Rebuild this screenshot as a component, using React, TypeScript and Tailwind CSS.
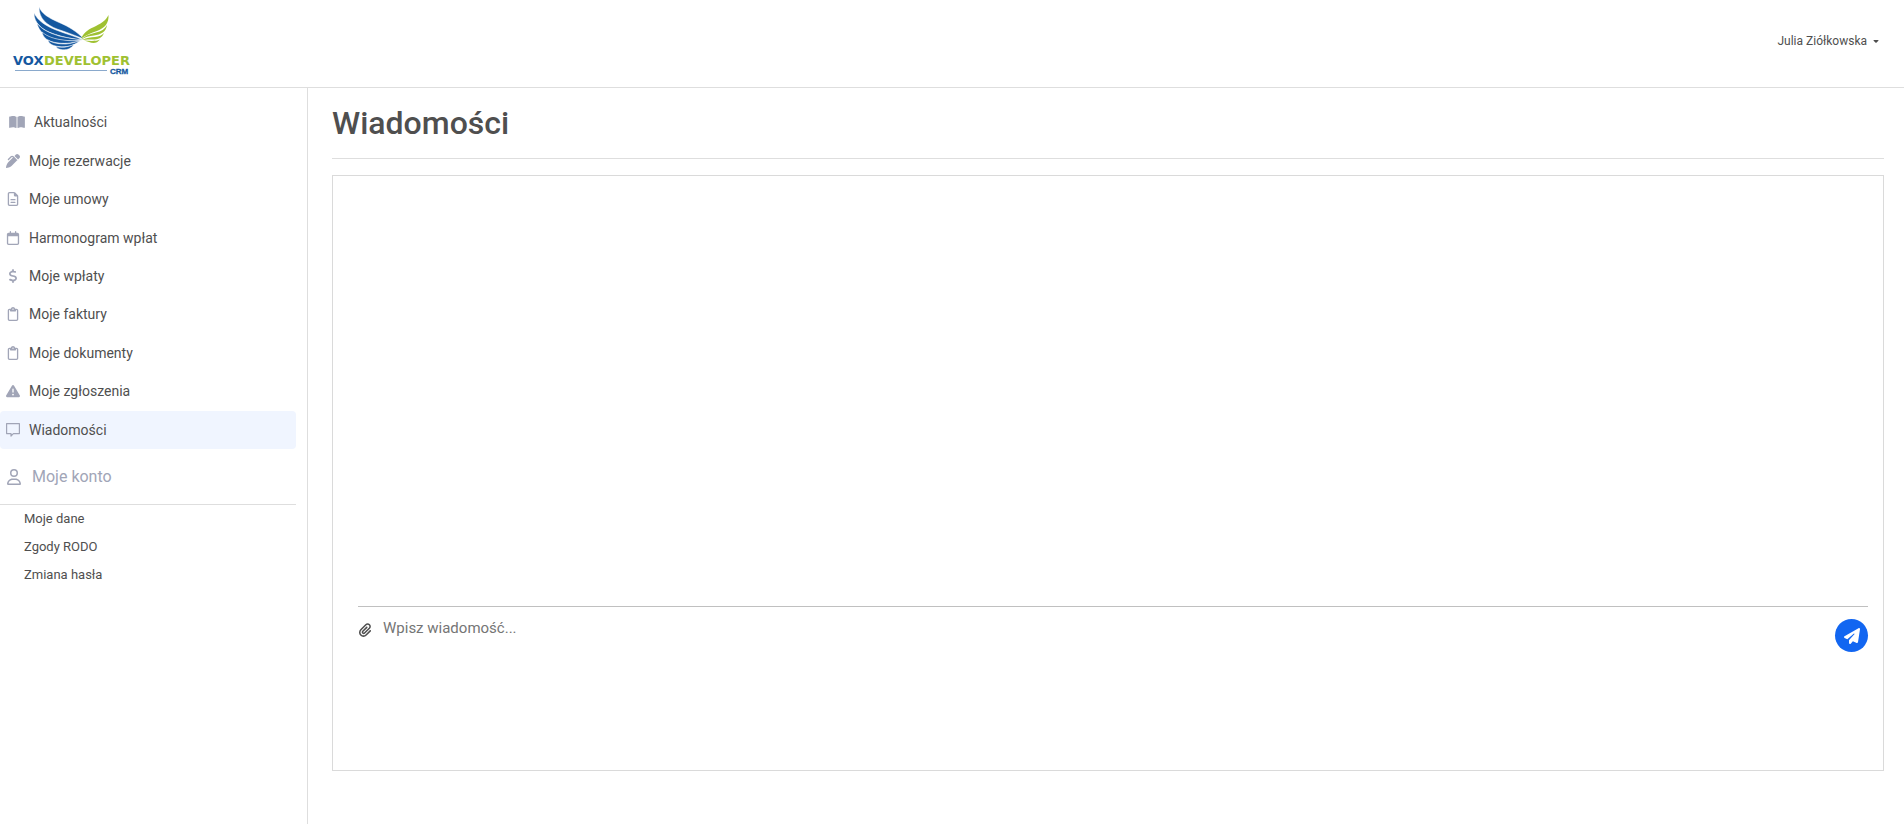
import type { IconType } from "react-icons";
import {
  FaBookOpen,
  FaPenClip,
  FaRegFileLines,
  FaRegCalendar,
  FaDollarSign,
  FaRegClipboard,
  FaTriangleExclamation,
  FaRegUser,
  FaPaperclip,
  FaPaperPlane,
  FaCaretDown,
} from "react-icons/fa6";

function MessageIcon({ className }: { className?: string }) {
  return (
    <svg viewBox="0 0 14 14" className={className} fill="none" stroke="currentColor" strokeWidth="1.2" aria-hidden="true">
      <path d="M.6.6h12.8v10H7.4L5 13v-2.4H.6z" strokeLinejoin="round" />
    </svg>
  );
}

type Item = { label: string; icon: IconType | typeof MessageIcon; wide?: boolean; active?: boolean };

const items: Item[] = [
  { label: "Aktualności", icon: FaBookOpen, wide: true },
  { label: "Moje rezerwacje", icon: FaPenClip },
  { label: "Moje umowy", icon: FaRegFileLines },
  { label: "Harmonogram wpłat", icon: FaRegCalendar },
  { label: "Moje wpłaty", icon: FaDollarSign },
  { label: "Moje faktury", icon: FaRegClipboard },
  { label: "Moje dokumenty", icon: FaRegClipboard },
  { label: "Moje zgłoszenia", icon: FaTriangleExclamation },
  { label: "Wiadomości", icon: MessageIcon, active: true },
];

const accountItems = ["Moje dane", "Zgody RODO", "Zmiana hasła"];

function Logo() {
  return (
    <svg viewBox="0 0 120 72" className="h-[72px] w-[120px]" role="img" aria-label="VoxDeveloper CRM">
      <g fill="#1458a0" stroke="#fff" strokeWidth=".5">
        <path d="M29 3C32 10 39 14 48 18C60 23 67 28 74 35C64 31 56 28 47 25C37 21 29 15 29 3Z" />
        <path d="M24 9C28 17 36 22 46 26C56 30 65 32 73 36C62 35 53 33 44 30C32 26 24 19 24 9Z" />
        <path d="M27 19C32 26 40 29 49 32C57 34 65 35 72 36C62 37.500 53 37 44 34.500C35 32 29 28 27 19Z" />
        <path d="M32 28C38 33 45 35 53 36C60 37 66 37 71 36.500C62 39.500 53 40 45 38.500C38 37 33 34 32 28Z" />
        <path d="M38 36C43 39.500 49 40 56 40C61 39.500 66 38 70 37C63 42 56 43.500 49 42.500C43 42 39 40 38 36Z" />
        <path d="M46 42.500C51 44 57 43.500 64 40.500C61 45 56 46.500 51 45.500C48 45 47 44 46 42.500Z" />
      </g>
      <g fill="#9fc131">
        <path d="M98.500 11C99 19 95 24 87 27C81 29 76 31 71 34.500C74 28 79 25 86 22C92 19 96 16 98.500 11Z" />
        <path d="M97 21C96 28 91 30.500 84 31.500C79 32 75 33 71 35.500C75 31.500 80 30 86 28.500C91 27.500 95 25 97 21Z" />
        <path d="M94 29C92 34 88 35.500 83 35.500C79 35.500 76 35 72 36C77 33.500 81 33.500 85 33C89 32.500 92 31.500 94 29Z" />
        <path d="M90 35.500C87 39.500 83 39.500 79 38L74 36.500C80 37 86 37.500 90 35.500Z" />
      </g>
      <g fontFamily="DejaVu Sans, sans-serif" fontWeight="700" fontSize="13">
        <text x="3" y="61" fill="#1458a0">VOX</text>
        <text x="34" y="61" fill="#9fc131">DEVELOPER</text>
      </g>
      <path d="M5 66.500H97" stroke="#8aa9cc" strokeWidth="1" />
      <text x="100" y="70" fontFamily="Liberation Sans, sans-serif" fontWeight="700" fontSize="8" fill="#1458a0" stroke="#1458a0" strokeWidth=".3">CRM</text>
    </svg>
  );
}

export default function App() {
  return (
    <div className="flex min-h-screen flex-col bg-white font-[Roboto,sans-serif] text-[#4f4f4f]">
      <header className="flex h-22 items-start justify-between border-b border-[#dedede] pr-6 pl-[10px]">
        <a href="#" className="pt-1"><Logo /></a>
        <button type="button" className="mt-8 flex items-center gap-[5px] text-xs leading-[18px]">
          Julia Ziółkowska
          <FaCaretDown className="size-2" aria-hidden="true" />
        </button>
      </header>
      <div className="flex grow">
        <aside className="w-77 shrink-0 border-r border-[#dedede] pt-[15px] pr-[11px]">
          <nav>
            <ul className="grid h-[346px] grid-rows-9">
              {items.map(({ label, icon: Icon, wide, active }) => (
                <li key={label}>
                  <a
                    href="#"
                    className={`flex h-full items-center rounded text-sm ${wide ? "gap-2 pl-2" : "gap-[9px] pl-[6px]"} ${active ? "bg-[#f0f5ff]" : ""}`}
                  >
                    <Icon className={`shrink-0 text-[#a1a5b7] ${wide ? "h-[14px] w-[18px]" : "h-[14px] w-[14px]"}`} />
                    {label}
                  </a>
                </li>
              ))}
            </ul>
            <h2 className="flex h-14 items-center gap-[11px] border-b border-[#dedede] pl-[7px] text-base text-[#a1a5b7]">
              <FaRegUser className="h-4 w-[14px]" aria-hidden="true" />
              Moje konto
            </h2>
            <ul>
              {accountItems.map((label) => (
                <li key={label}>
                  <a href="#" className="flex h-[28px] items-center pl-6 text-[13px]">{label}</a>
                </li>
              ))}
            </ul>
          </nav>
        </aside>
        <main className="grow pt-[15px] pr-5 pl-6">
          <h1 className="border-b border-[#dedede] pb-[15px] text-[32px] leading-10 font-medium">Wiadomości</h1>
          <section className="mt-4 flex h-[596px] flex-col justify-end border border-[#dadada] pr-[15px] pl-[25px]">
            <form className="flex h-[164px] items-start border-t border-[#c0c0c0]">
              <button type="button" aria-label="Dodaj załącznik" className="mt-4">
                <FaPaperclip className="size-[14px]" />
              </button>
              <textarea
                aria-label="Wiadomość"
                placeholder="Wpisz wiadomość..."
                className="mt-[9px] ml-[11px] h-32 grow resize-none text-[15px] leading-6 outline-none placeholder:text-[#757575]"
              />
              <button
                type="button"
                aria-label="Wyślij"
                className="mt-3 flex size-[33px] items-center justify-center rounded-full bg-[#1266f1] text-white"
              >
                <FaPaperPlane className="size-4" />
              </button>
            </form>
          </section>
        </main>
      </div>
    </div>
  );
}
